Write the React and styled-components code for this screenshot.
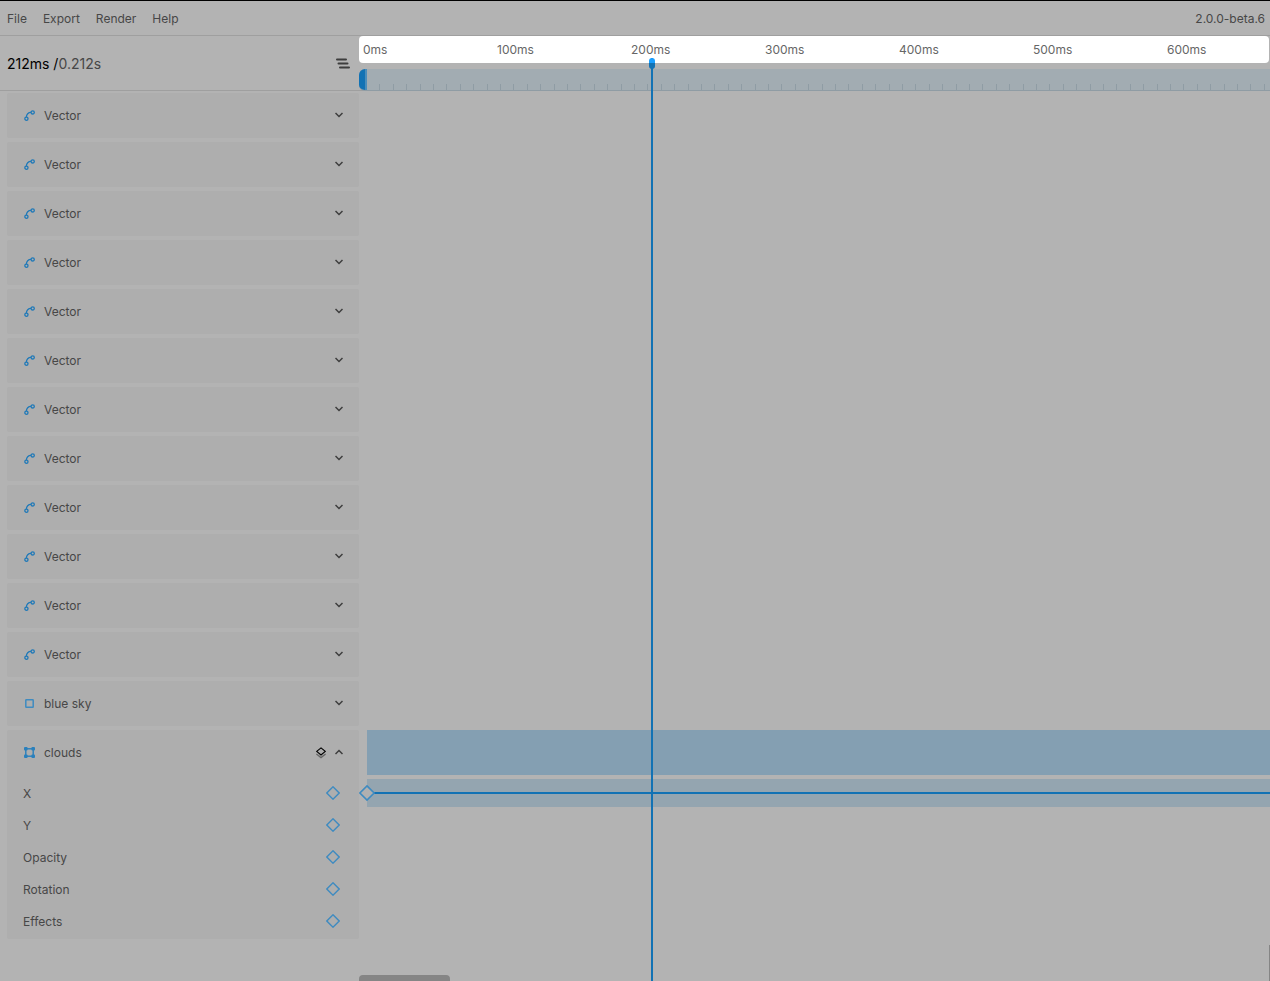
import React from 'react'
import styled, { createGlobalStyle } from 'styled-components';

const GlobalStyle = createGlobalStyle`
* {
  box-sizing: border-box;
}

body {
  margin: 0;
  background: #b3b3b3;
  color: #474747;
  font-family: Inter, "Liberation Sans", sans-serif;
  font-size: 12px;
  line-height: 16px;
  overflow: hidden;
}

button {
  display: flex;
  padding: 0;
  border: 0;
  background: none;
  color: inherit;
  font: inherit;
}

svg {
  display: block;
}
`;

const Wrapper = styled.div`
position: relative;
display: flex;
flex-direction: column;
min-height: 100vh;
border-top: 1px solid #000;
overflow: hidden;
`;

const MenuBar = styled.nav`
display: flex;
align-items: center;
gap: 16px;
height: 35px;
padding: 2px 5px 0 7px;
border-bottom: 1px solid #9f9f9f;
`;

const Version = styled.span`
margin-left: auto;
`;

const Columns = styled.div`
display: grid;
grid-template-columns: 359px minmax(0, 1fr);
`;

const Header = styled(Columns)`
position: relative;
height: 55px;
border-bottom: 1px solid #9f9f9f;
`;

const TimeBar = styled.div`
display: flex;
align-items: center;
justify-content: space-between;
padding: 0 9px 0 7px;
font-size: 14px;
line-height: 20px;
`;

const CurrentTime = styled.span`
color: #000;
`;

const Rulers = styled.div`
display: flex;
flex-direction: column;
gap: 6px;
height: 55px;
overflow: hidden;
`;

const TimeRuler = styled.div`
display: flex;
align-items: center;
height: 27px;
margin-right: 1px;
padding-left: 4px;
border-radius: 4px;
background: #fff;
color: #666;
overflow: hidden;
`;

const TimeLabel = styled.span`
flex: 0 0 134px;
`;

const WorkArea = styled.div`
display: flex;
align-items: flex-end;
height: 22px;
background: #a2acb2;
border-bottom: 1px solid #8f9ca4;
border-radius: 6px 0 0 6px;
overflow: hidden;
`;

const WorkHandle = styled.button`
flex: 0 0 8px;
height: 22px;
margin-bottom: -1px;
background: #1272b4;
border-right: 2px solid #4b8dbb;
`;

const TickGroup = styled.div`
display: flex;
flex: 0 0 134px;
height: 6px;
`;

const Tick = styled.div`
flex: 1;
border-right: 1px solid #8f9ca4;
`;

const Layers = styled.div`
display: flex;
flex-direction: column;
gap: 4px;
padding-top: 2px;
`;

const Panel = styled.div`
margin-left: 7px;
border-radius: 2px;
background: #aeaeae;
`;

const LayerTitle = styled.div`
display: flex;
align-items: center;
gap: 9px;
height: 45px;
padding: 0 16px 0 17px;
`;

const LayerActions = styled.div`
display: flex;
align-items: center;
gap: 9px;
margin-left: auto;
`;

const Properties = styled.div`
padding: 2px 0;
`;

const Property = styled.div`
display: flex;
align-items: center;
justify-content: space-between;
height: 32px;
padding: 0 19px 0 16px;
`;

const PropertyName = styled.span`
padding-top: 2px;
`;

const Lanes = styled.div`
display: flex;
flex-direction: column;
gap: 4px;
`;

const Clip = styled.div`
height: 45px;
margin-left: 8px;
background: #849fb2;
`;

const KeyframeLane = styled.div`
position: relative;
display: flex;
align-items: center;
height: 28px;
margin-left: 8px;
background: #94a5b0;
`;

const Tween = styled.div`
flex: 1;
height: 2px;
background: #1272b4;
`;

const Keyframe = styled.button`
position: absolute;
left: -8px;
top: 6px;
`;

const Playhead = styled.div`
position: absolute;
top: 57px;
bottom: 0;
width: 6px;
background: linear-gradient(#1272b4, #1272b4) center / 2px 100% no-repeat;

&::before {
  content: '';
  display: block;
  height: 11px;
  border-radius: 3px;
  background: linear-gradient(#1a9fff 5px, #1272b4 5px);
}
`;

const ScrollX = styled.div`
position: absolute;
left: 359px;
bottom: 0;
width: 91px;
height: 6px;
border-radius: 4px 4px 0 0;
background: #858585;
`;

const ScrollY = styled.div`
position: absolute;
right: 0;
bottom: 0;
width: 1px;
height: 36px;
background: #858585;
`;

const VectorIcon = () => (
  <svg width="11" height="11" viewBox="0 0 11 11" fill="none" stroke="#1f79b8" strokeWidth="1.3">
    <circle cx="2.4" cy="8.7" r="1.6" />
    <circle cx="8.7" cy="2.4" r="1.6" />
    <path d="M2.4 7C2.4 4.3 4.3 2.4 7 2.4" />
  </svg>
);

const RectIcon = () => (
  <svg width="11" height="11" viewBox="0 0 11 11" fill="none" stroke="#3f8bc0" strokeWidth="1.5">
    <rect x="1.8" y="1.8" width="7.4" height="7.4" rx="0.5" />
  </svg>
);

const GroupIcon = () => (
  <svg width="11" height="11" viewBox="0 0 11 11" fill="#2a80bc">
    <rect x="1.8" y="1.8" width="7.4" height="7.4" fill="none" stroke="#2a80bc" strokeWidth="1.4" />
    <rect x="0" y="0" width="3.6" height="3.6" rx="1" />
    <rect x="7.4" y="0" width="3.6" height="3.6" rx="1" />
    <rect x="0" y="7.4" width="3.6" height="3.6" rx="1" />
    <rect x="7.4" y="7.4" width="3.6" height="3.6" rx="1" />
  </svg>
);

const Chevron = ({ up }) => (
  <svg width="8" height="8" viewBox="0 0 8 8" fill="none" stroke="#3d3d3d" strokeWidth="1.5">
    <path d={up ? 'M0.5 5L4 1.5L7.5 5' : 'M0.5 1L4 4.5L7.5 1'} />
  </svg>
);

const StackIcon = () => (
  <svg width="10" height="12" viewBox="0 0 10 12" fill="none">
    <path d="M0.4 7L5 10.6L9.6 7" stroke="#666" strokeWidth="1.3" />
    <path d="M5 0.9L9.3 4.4L5 7.9L0.7 4.4Z" stroke="#000" strokeWidth="1.2" />
  </svg>
);

const LinesIcon = () => (
  <svg width="14" height="12" viewBox="0 0 14 12" stroke="#3d3d3d" strokeWidth="2" strokeLinecap="round">
    <path d="M1 1.5H10M2.5 5.5H11.5M4 9.5H13" />
  </svg>
);

const Diamond = ({ size, fill = 'none' }) => (
  <svg width={size} height={size} viewBox="0 0 14 14" fill={fill} stroke="#3f8bc0" strokeWidth="1.4">
    <path d="M7 0.8L13.2 7L7 13.2L0.8 7Z" />
  </svg>
);

const menus = ['File', 'Export', 'Render', 'Help'];
const labels = [0, 100, 200, 300, 400, 500, 600];
const ticks = [...Array(10).keys()];
const segments = [...Array(20).keys()];
const properties = ['X', 'Y', 'Opacity', 'Rotation', 'Effects'];

const layers = [
  ...Array(12).fill({ name: 'Vector', Icon: VectorIcon }),
  { name: 'blue sky', Icon: RectIcon },
  { name: 'clouds', Icon: GroupIcon, open: true },
];

// 134px for every 100ms, the track starts after the work area handle
const TRACK_START = 359 + 8;
const timeToX = (ms) => TRACK_START + Math.round(ms * 1.34);

const Layer = ({ name, Icon, open }) => (
  <Columns>
    <Panel>
      <LayerTitle>
        <Icon />
        <span>{name}</span>
        <LayerActions>
          {open && <button aria-label="Stack"><StackIcon /></button>}
          <button aria-label="Toggle layer" aria-expanded={!!open}><Chevron up={open} /></button>
        </LayerActions>
      </LayerTitle>
      {open && (
        <Properties>
          {properties.map((property) => (
            <Property key={property}>
              <PropertyName>{property}</PropertyName>
              <button aria-label={`Add ${property} keyframe`}><Diamond size={14} /></button>
            </Property>
          ))}
        </Properties>
      )}
    </Panel>
    {open && (
      <Lanes>
        <Clip />
        <KeyframeLane>
          <Tween />
          <Keyframe aria-label="Keyframe"><Diamond size={16} fill="#b0b0b0" /></Keyframe>
        </KeyframeLane>
      </Lanes>
    )}
  </Columns>
);

export default function App() {
  const time = 212;

  return (
    <Wrapper>
      <GlobalStyle />
      <MenuBar>
        {menus.map((menu) => <button key={menu}>{menu}</button>)}
        <Version>2.0.0-beta.6</Version>
      </MenuBar>
      <Header>
        <TimeBar>
          <div><CurrentTime>{time}ms /</CurrentTime><span>{time / 1000}s</span></div>
          <button aria-label="Layer list"><LinesIcon /></button>
        </TimeBar>
        <Rulers>
          <TimeRuler>
            {labels.map((label) => <TimeLabel key={label}>{label}ms</TimeLabel>)}
          </TimeRuler>
          <WorkArea>
            <WorkHandle aria-label="Work area start" />
            {segments.map((segment) => (
              <TickGroup key={segment}>
                {ticks.map((tick) => <Tick key={tick} />)}
              </TickGroup>
            ))}
          </WorkArea>
        </Rulers>
      </Header>
      <Layers>
        {layers.map((layer, i) => <Layer key={i} {...layer} />)}
      </Layers>
      <Playhead style={{ left: timeToX(time) - 2 }} />
      <ScrollX />
      <ScrollY />
    </Wrapper>
  );
}
